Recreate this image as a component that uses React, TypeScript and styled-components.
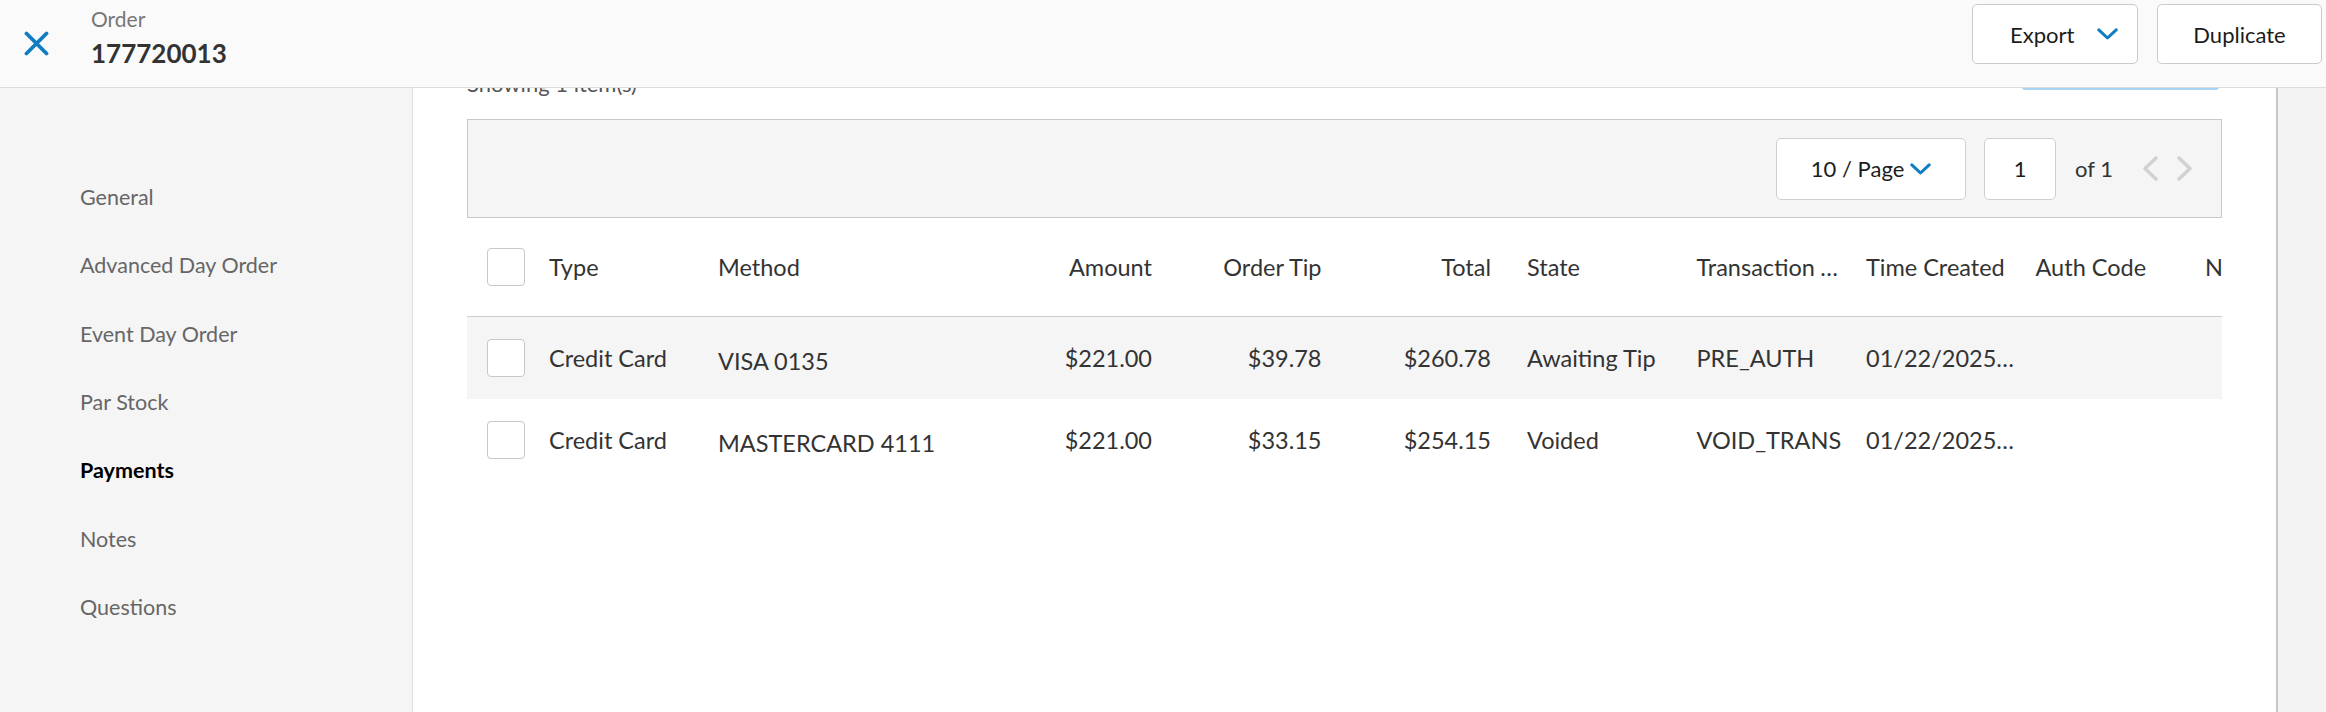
import React from 'react';
import styled, { createGlobalStyle } from 'styled-components';

const GlobalStyle = createGlobalStyle`
  html, body { margin: 0; padding: 0; background: #fff; }
  body { font-family: Lato, "Open Sans", sans-serif; color: #333; }
  * { box-sizing: border-box; }
`;

const BLUE = '#0f7dc2';

const Page = styled.div`
  width: 2326px;
  height: 712px;
  display: flex;
  flex-direction: column;
  overflow: hidden;
`;

const Header = styled.header`
  height: 88px;
  flex: none;
  display: flex;
  align-items: flex-start;
  background: #fafafa;
  border-bottom: 1px solid #dcdcdc;
  position: relative;
  z-index: 2;
`;

const CloseButton = styled.button`
  width: 91px;
  height: 88px;
  flex: none;
  border: 0;
  background: transparent;
  padding: 0 0 0 24px;
  display: flex;
  align-items: center;
  margin-top: -1px;
  cursor: pointer;
`;

const TitleBlock = styled.div`
  display: flex;
  flex-direction: column;
  padding-top: 6px;
`;

const TitleLabel = styled.div`
  font-size: 21px;
  line-height: 26px;
  color: #777;
`;

const TitleValue = styled.div`
  font-size: 26px;
  line-height: 34px;
  margin-top: 4px;
  font-weight: 700;
  color: #333;
`;

const Actions = styled.div`
  margin-left: auto;
  display: flex;
  gap: 19px;
  padding: 4px 4px 0 0;
`;

const HeaderButton = styled.button<{ $withIcon?: boolean; $width: number }>`
  height: 60px;
  width: ${(p) => p.$width}px;
  border: 1px solid #cbcbcb;
  border-radius: 5px;
  background: #fff;
  font-family: inherit;
  font-size: 22px;
  color: #1c1c1c;
  display: flex;
  align-items: center;
  justify-content: ${(p) => (p.$withIcon ? 'space-between' : 'center')};
  padding: ${(p) => (p.$withIcon ? '0 19px 0 37px' : '0')};
  cursor: pointer;
`;

const Body = styled.div`
  flex: 1;
  display: flex;
  min-height: 0;
`;

const Sidebar = styled.nav`
  width: 413px;
  flex: none;
  background: #f5f5f5;
  border-right: 1px solid #dedede;
  padding: 75px 0 0 80px;
  display: flex;
  flex-direction: column;
`;

const NavItem = styled.div<{ $active?: boolean }>`
  height: 68.3px;
  display: flex;
  align-items: center;
  font-size: 21.5px;
  color: ${(p) => (p.$active ? '#000' : '#666')};
  font-weight: ${(p) => (p.$active ? 700 : 400)};
`;

const Main = styled.main`
  flex: 1;
  min-width: 0;
  background: #fff;
  border-right: 2px solid #c6c6c6;
  padding: 0 54px;
  overflow: hidden;
`;

const RightRail = styled.div`
  width: 48px;
  flex: none;
  background: #f3f3f3;
`;

const Toolbar = styled.div`
  height: 56px;
  margin-top: -54px;
  display: flex;
  align-items: flex-end;
  justify-content: space-between;
`;

const ResultCount = styled.span`
  font-size: 22px;
  line-height: 26px;
  color: #555;
  margin-bottom: -7px;
`;

const ToolbarButton = styled.button`
  width: 197px;
  height: 56px;
  margin-right: 3px;
  border: 2px solid #a6d4f2;
  border-radius: 3px;
  background: #fff;
  font-family: inherit;
  font-size: 21px;
  color: ${BLUE};
`;

const PaginationBar = styled.div`
  margin-top: 29px;
  height: 99px;
  background: #f5f5f5;
  border: 1px solid #c9c9c9;
  display: flex;
  align-items: center;
  justify-content: flex-end;
  padding-right: 28px;
`;

const PageSizeSelect = styled.div`
  width: 190px;
  height: 62px;
  background: #fff;
  border: 1px solid #cfcfcf;
  border-radius: 5px;
  display: flex;
  align-items: center;
  justify-content: center;
  gap: 6px;
  font-size: 22px;
  color: #1c1c1c;
`;

const PageInput = styled.div`
  width: 72px;
  height: 62px;
  margin-left: 18px;
  background: #fff;
  border: 1px solid #cfcfcf;
  border-radius: 5px;
  display: flex;
  align-items: center;
  justify-content: center;
  font-size: 22px;
  color: #1c1c1c;
`;

const PageCount = styled.span`
  margin-left: 19px;
  font-size: 22px;
  color: #333;
`;

const PagerArrows = styled.div`
  margin-left: 29px;
  display: flex;
  gap: 19px;
  align-items: center;
`;

const TableWrap = styled.div`
  width: 100%;
  overflow: hidden;
`;

const COLUMNS = '73px 169px 300.5px repeat(9, 169.5px)';

const Row = styled.div<{ $head?: boolean; $shade?: boolean; $height: number }>`
  display: grid;
  grid-template-columns: ${COLUMNS};
  height: ${(p) => p.$height}px;
  align-items: center;
  background: ${(p) => (p.$shade ? '#f5f5f5' : '#fff')};
  border-bottom: ${(p) => (p.$head ? '1px solid #cdcdcd' : '0')};
  width: max-content;
  min-width: 100%;
`;

const Cell = styled.div<{ $align?: 'left' | 'right'; $nudge?: number }>`
  font-size: 23.5px;
  line-height: 30px;
  color: #333;
  white-space: nowrap;
  overflow: hidden;
  text-overflow: ellipsis;
  text-align: ${(p) => p.$align ?? 'left'};
  padding: ${(p) => (p.$nudge ?? 0) * 2}px ${(p) => (p.$align === 'right' ? 27 : 9)}px 0 9px;
`;

const CheckCell = styled.div`
  padding-left: 20px;
  display: flex;
  align-items: center;
`;

const CheckBox = styled.span`
  width: 38px;
  height: 38px;
  border: 1px solid #c8c8c8;
  border-radius: 4px;
  background: #fff;
  display: block;
`;

const CloseIcon = () => (
  <svg width="25" height="25" viewBox="0 0 25 25" fill="none">
    <path d="M2.5 2.5 L22.5 22.5 M22.5 2.5 L2.5 22.5" stroke={BLUE} strokeWidth="3.8" strokeLinecap="round" />
  </svg>
);

const ChevronDown = ({ w = 21, h = 12 }: { w?: number; h?: number }) => (
  <svg width={w} height={h} viewBox="0 0 21 12" fill="none">
    <path d="M1.8 1.8 L10.5 10 L19.2 1.8" stroke={BLUE} strokeWidth="3" strokeLinecap="round" strokeLinejoin="round" />
  </svg>
);

const PagerChevron = ({ dir }: { dir: 'left' | 'right' }) => (
  <svg width="16" height="25" viewBox="0 0 16 25" fill="none">
    <path
      d={dir === 'left' ? 'M14 2 L3 12.5 L14 23' : 'M2 2 L13 12.5 L2 23'}
      stroke="#d2d2d2"
      strokeWidth="3.6"
      strokeLinecap="round"
      strokeLinejoin="round"
    />
  </svg>
);

type Payment = {
  type: string;
  method: string;
  amount: string;
  tip: string;
  total: string;
  state: string;
  txn: string;
  time: string;
};

const payments: Payment[] = [
  {
    type: 'Credit Card',
    method: 'VISA 0135',
    amount: '$221.00',
    tip: '$39.78',
    total: '$260.78',
    state: 'Awaiting Tip',
    txn: 'PRE_AUTH',
    time: '01/22/2025 11:42 AM',
  },
  {
    type: 'Credit Card',
    method: 'MASTERCARD 4111',
    amount: '$221.00',
    tip: '$33.15',
    total: '$254.15',
    state: 'Voided',
    txn: 'VOID_TRANS',
    time: '01/22/2025 11:45 AM',
  },
];

const navItems = ['General', 'Advanced Day Order', 'Event Day Order', 'Par Stock', 'Payments', 'Notes', 'Questions'];

export default function App() {
  return (
    <Page>
      <GlobalStyle />
      <Header>
        <CloseButton aria-label="Close">
          <CloseIcon />
        </CloseButton>
        <TitleBlock>
          <TitleLabel>Order</TitleLabel>
          <TitleValue>177720013</TitleValue>
        </TitleBlock>
        <Actions>
          <HeaderButton $withIcon $width={166}>
            Export
            <ChevronDown />
          </HeaderButton>
          <HeaderButton $width={165}>Duplicate</HeaderButton>
        </Actions>
      </Header>
      <Body>
        <Sidebar>
          {navItems.map((item) => (
            <NavItem key={item} $active={item === 'Payments'}>
              {item}
            </NavItem>
          ))}
        </Sidebar>
        <Main>
          <Toolbar>
            <ResultCount>Showing 1 item(s)</ResultCount>
            <ToolbarButton>Add Payment</ToolbarButton>
          </Toolbar>
          <PaginationBar>
            <PageSizeSelect>
              10 / Page
              <ChevronDown />
            </PageSizeSelect>
            <PageInput>1</PageInput>
            <PageCount>of 1</PageCount>
            <PagerArrows>
              <PagerChevron dir="left" />
              <PagerChevron dir="right" />
            </PagerArrows>
          </PaginationBar>
          <TableWrap>
            <Row $head $height={99}>
              <CheckCell>
                <CheckBox />
              </CheckCell>
              <Cell>Type</Cell>
              <Cell>Method</Cell>
              <Cell $align="right">Amount</Cell>
              <Cell $align="right">Order Tip</Cell>
              <Cell $align="right">Total</Cell>
              <Cell>State</Cell>
              <Cell>Transaction Type</Cell>
              <Cell>Time Created</Cell>
              <Cell>Auth Code</Cell>
              <Cell>Notes</Cell>
              <Cell>Actions</Cell>
            </Row>
            {payments.map((p, i) => (
              <Row key={p.method} $shade={i === 0} $height={i === 0 ? 82 : 81}>
                <CheckCell>
                  <CheckBox />
                </CheckCell>
                <Cell>{p.type}</Cell>
                <Cell $nudge={3}>{p.method}</Cell>
                <Cell $align="right">{p.amount}</Cell>
                <Cell $align="right">{p.tip}</Cell>
                <Cell $align="right">{p.total}</Cell>
                <Cell>{p.state}</Cell>
                <Cell>{p.txn}</Cell>
                <Cell>{p.time}</Cell>
                <Cell />
                <Cell />
                <Cell />
              </Row>
            ))}
          </TableWrap>
        </Main>
        <RightRail />
      </Body>
    </Page>
  );
}
